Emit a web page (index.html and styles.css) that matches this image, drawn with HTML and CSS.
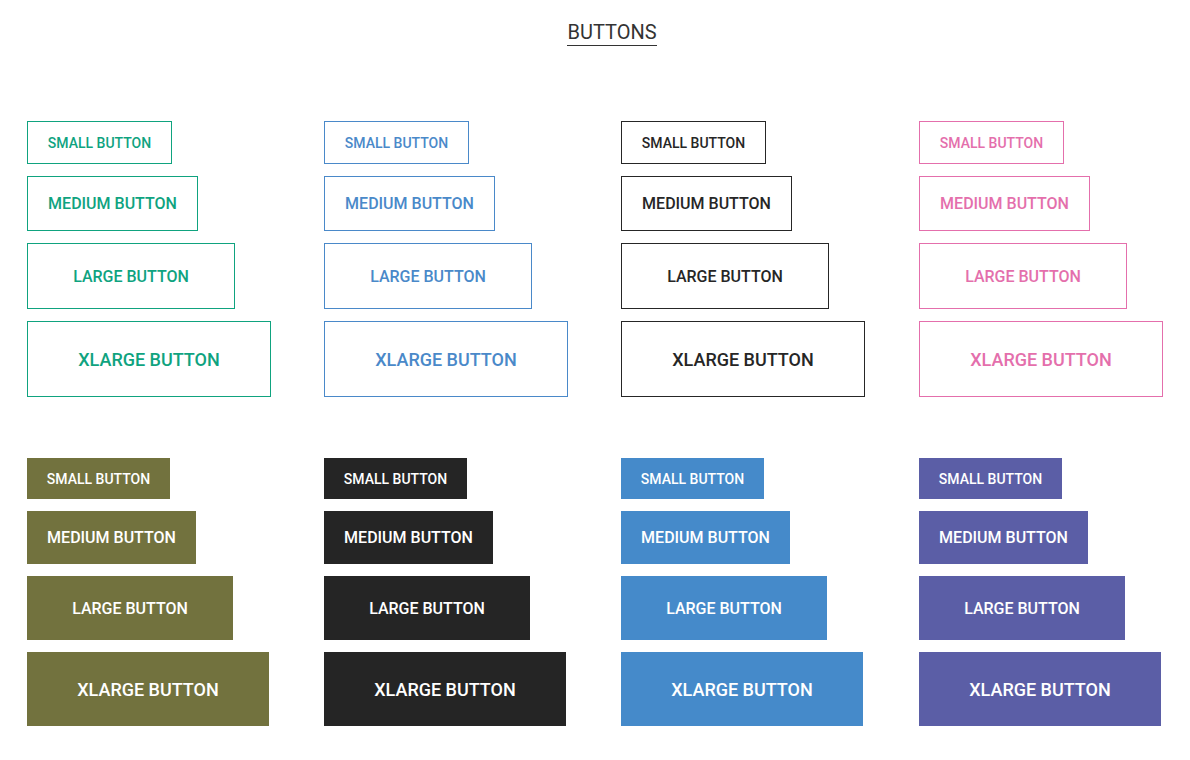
FILE: index.html
```html
<!DOCTYPE html>
<html>
<head>
<meta charset="utf-8">
<link rel="stylesheet" href="styles.css">
</head>
<body>
<header class="head"><h1 class="title">BUTTONS</h1></header>
<section class="grid outline">
  <div class="col c-green">
    <a class="btn sm">SMALL BUTTON</a>
    <a class="btn md">MEDIUM BUTTON</a>
    <a class="btn lg">LARGE BUTTON</a>
    <a class="btn xl">XLARGE BUTTON</a>
  </div>
  <div class="col c-blue">
    <a class="btn sm">SMALL BUTTON</a>
    <a class="btn md">MEDIUM BUTTON</a>
    <a class="btn lg">LARGE BUTTON</a>
    <a class="btn xl">XLARGE BUTTON</a>
  </div>
  <div class="col c-dark">
    <a class="btn sm">SMALL BUTTON</a>
    <a class="btn md">MEDIUM BUTTON</a>
    <a class="btn lg">LARGE BUTTON</a>
    <a class="btn xl">XLARGE BUTTON</a>
  </div>
  <div class="col c-pink">
    <a class="btn sm">SMALL BUTTON</a>
    <a class="btn md">MEDIUM BUTTON</a>
    <a class="btn lg">LARGE BUTTON</a>
    <a class="btn xl">XLARGE BUTTON</a>
  </div>
</section>
<section class="grid filled">
  <div class="col f-olive">
    <a class="btn sm">SMALL BUTTON</a>
    <a class="btn md">MEDIUM BUTTON</a>
    <a class="btn lg">LARGE BUTTON</a>
    <a class="btn xl">XLARGE BUTTON</a>
  </div>
  <div class="col f-dark">
    <a class="btn sm">SMALL BUTTON</a>
    <a class="btn md">MEDIUM BUTTON</a>
    <a class="btn lg">LARGE BUTTON</a>
    <a class="btn xl">XLARGE BUTTON</a>
  </div>
  <div class="col f-blue">
    <a class="btn sm">SMALL BUTTON</a>
    <a class="btn md">MEDIUM BUTTON</a>
    <a class="btn lg">LARGE BUTTON</a>
    <a class="btn xl">XLARGE BUTTON</a>
  </div>
  <div class="col f-purple">
    <a class="btn sm">SMALL BUTTON</a>
    <a class="btn md">MEDIUM BUTTON</a>
    <a class="btn lg">LARGE BUTTON</a>
    <a class="btn xl">XLARGE BUTTON</a>
  </div>
</section>
</body>
</html>
```
FILE: styles.css
```css
html, body {
  margin: 0;
  padding: 0;
  background: #fff;
  font-family: Roboto, "Liberation Sans", Arial, sans-serif;
}

.head {
  display: flex;
  justify-content: center;
  padding-top: 22px;
  padding-left: 34px;
}

.title {
  margin: 0;
  font-size: 20px;
  font-weight: 400;
  line-height: 21px;
  color: #333;
  padding-bottom: 2px;
  border-bottom: 1px solid #333;
}

.grid {
  display: grid;
  grid-template-columns: 297px 297px 298px 1fr;
  padding-left: 27px;
}

.outline {
  margin-top: 75px;
}

.filled {
  margin-top: 61px;
}

.col {
  display: flex;
  flex-direction: column;
  align-items: flex-start;
  gap: 12px;
}

.btn {
  display: flex;
  align-items: center;
  justify-content: center;
  box-sizing: border-box;
  font-weight: 500;
  text-decoration: none;
  white-space: nowrap;
}

.btn.sm { width: 143px; height: 41px; font-size: 14px; }
.btn.md { width: 169px; height: 53px; font-size: 16px; }
.btn.lg { width: 206px; height: 64px; font-size: 16px; }
.btn.xl { width: 242px; height: 74px; font-size: 18px; }

.outline .btn.sm { width: 145px; height: 43px; }
.outline .btn.md { width: 171px; height: 55px; }
.outline .btn.lg { width: 208px; height: 66px; }
.outline .btn.xl { width: 244px; height: 76px; }

.outline .btn { border: 1px solid currentColor; background: #fff; }

.c-green .btn { color: #0fa37f; }
.c-blue .btn { color: #4a89c9; }
.c-dark .btn { color: #262626; }
.c-pink .btn { color: #e46fac; }

.filled .btn { color: #fff; }
.f-olive .btn { background: #72723e; }
.f-dark .btn { background: #252525; }
.f-blue .btn { background: #458aca; }
.f-purple .btn { background: #5b5ea6; }
```
